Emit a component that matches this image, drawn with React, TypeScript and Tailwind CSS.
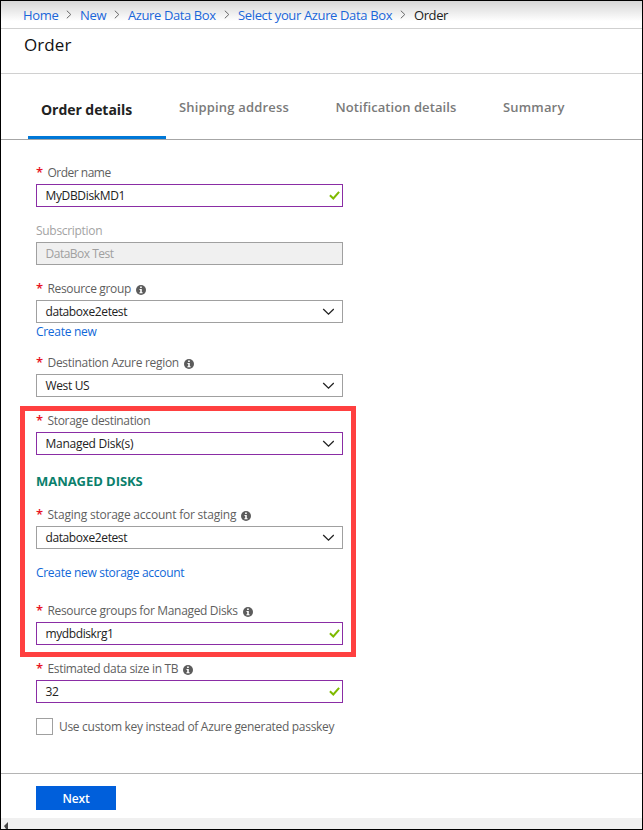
import React from "react";

const InfoIcon = () => (
  <svg className="mt-px shrink-0" width="10" height="10" viewBox="0 0 10 10">
    <circle cx="5" cy="5" r="5" fill="#5c5c5c" />
    <path d="M4.1 1.5h1.7v1.5H4.1zM3.5 3.9h2.3v3.4h.8v1H3.4v-1h.8V4.9h-.7z" fill="#fff" />
  </svg>
);

const Check = () => (
  <svg className="mr-[2px] shrink-0" width="11" height="9" viewBox="0 0 11 9">
    <path d="M.9 4.2 4.3 7.5 10.1 .8" fill="none" stroke="#7fba00" strokeWidth="2" />
  </svg>
);

const Chevron = () => (
  <svg className="mr-2 mt-px shrink-0" width="12" height="8" viewBox="0 0 12 8">
    <path d="M1.2 1 6.5 6.2 11.8 1" fill="none" stroke="#222" strokeWidth="1.3" />
  </svg>
);

const Separator = () => (
  <svg className="mt-[-1px] shrink-0" width="6" height="9" viewBox="0 0 6 9">
    <path d="M.8 .7 4.8 4.5 .8 8.3" fill="none" stroke="#666" strokeWidth="1" />
  </svg>
);

type FieldProps = {
  label: string;
  labelClass?: string;
  value: string;
  valueClass?: string;
  required?: boolean;
  info?: boolean;
  kind: "valid" | "select" | "disabled";
  edited?: boolean;
};

function Field({ label, labelClass = "tracking-[-0.2px]", value, valueClass = "tracking-[-0.4px]", required = true, info, kind, edited }: FieldProps) {
  const disabled = kind === "disabled";
  return (
    <div className="w-[307px]">
      <div className={`flex h-[23px] items-center whitespace-nowrap pt-px ${disabled ? "text-[#a3a3a3]" : "text-[#5f5f5f]"}`}>
        {required && <span className="mt-[-2px] w-[11.5px] shrink-0 text-[13px] font-semibold leading-none text-[#e81123]">*</span>}
        <span className={labelClass}>{label}</span>
        {info && (
          <span className="ml-[5px] flex">
            <InfoIcon />
          </span>
        )}
      </div>
      <div
        className={`flex h-[23px] items-center border pl-[8.5px] ${
          disabled
            ? "border-[#a0a0a0] bg-[#f0f0f0] text-[#a0a0a0]"
            : edited
              ? "border-[#8a2da5] bg-white text-[#222]"
              : "border-[#a0a0a0] bg-white text-[#222]"
        }`}
      >
        <span className={`flex-1 ${valueClass}`}>{value}</span>
        {kind === "valid" && <Check />}
        {kind === "select" && <Chevron />}
      </div>
    </div>
  );
}

export default function App() {
  return (
    <div className="flex h-[830px] w-[643px] flex-col overflow-hidden border border-black bg-white font-['Open_Sans','Noto_Sans',sans-serif] text-[12px] leading-[18px] tracking-[-0.3px] text-[#222]">
      <nav className="flex h-[27px] shrink-0 items-center whitespace-nowrap bg-linear-to-b from-[#d6d6d6] to-white to-75% pl-[22px] pt-px text-[13px] tracking-[-0.4px] text-[#1a66d9]">
        <span className="w-[43px] tracking-[-0.3px]">Home</span>
        <Separator />
        <span className="ml-2 w-[34px] tracking-[-0.3px]">New</span>
        <Separator />
        <span className="ml-2 w-[96px]">Azure Data Box</span>
        <Separator />
        <span className="ml-2 w-[162px] tracking-[-0.36px]">Select your Azure Data Box</span>
        <Separator />
        <span className="ml-2 text-[#222]">Order</span>
      </nav>
      <header className="h-[46px] shrink-0 border-b border-t border-[#d0d0d0] pl-[23px] pt-1">
        <h1 className="text-[17px] leading-6 tracking-[0.1px] text-[#111]">Order</h1>
      </header>
      <div className="flex h-[66px] shrink-0 border-b border-[#a6a6a6] text-[13px] font-semibold tracking-[0.17px] text-[#7a7a7a]">
        <div className="ml-[27px] w-[138px] border-b-[3px] border-[#0078d7] pl-[13px] pt-[27px] text-[14px] font-bold tracking-[-0.05px] text-[#222]">Order details</div>
        <div className="ml-[13px] w-[156.5px] pt-6">Shipping address</div>
        <div className="w-[167.5px] pt-6 tracking-[0.07px]">Notification details</div>
        <div className="pt-6">Summary</div>
      </div>
      <main className="flex h-[634px] shrink-0 flex-col border-b border-[#b4b4b4] pl-[35px] pt-[21px]">
        <Field label="Order name" labelClass="tracking-[-0.5px]" value="MyDBDiskMD1" valueClass="tracking-[-0.35px]" kind="valid" edited />
        <div className="h-3" />
        <Field label="Subscription" labelClass="tracking-[-0.3px]" value="DataBox Test" valueClass="tracking-[-0.5px]" kind="disabled" required={false} />
        <div className="h-3" />
        <Field label="Resource group" labelClass="tracking-[-0.35px]" value="databoxe2etest" kind="select" info />
        <a className="h-7 text-[#1068d8]">Create new</a>
        <Field label="Destination Azure region" labelClass="tracking-[-0.3px]" value="West US" valueClass="tracking-[-0.35px]" kind="select" info />
        <section className="relative mt-3 w-[307px]">
          <div className="pointer-events-none absolute -left-4 -top-[3px] h-[251px] w-[336px] border-[5px] border-[#ff4040]" />
          <Field label="Storage destination" labelClass="tracking-[-0.33px]" value="Managed Disk(s)" valueClass="tracking-[-0.27px]" kind="select" edited />
          <h2 className="mb-[11px] mt-[15px] h-[22px] text-[13px] font-bold leading-[22px] tracking-[-0.05px] text-[#0a806c]">MANAGED DISKS</h2>
          <Field label="Staging storage account for staging" labelClass="tracking-[-0.21px]" value="databoxe2etest" kind="select" info />
          <a className="mb-[17px] mt-[15px] block h-[18px] text-[#1068d8]">Create new storage account</a>
          <Field label="Resource groups for Managed Disks" labelClass="tracking-[-0.33px]" value="mydbdiskrg1" kind="valid" edited info />
        </section>
        <div className="h-3" />
        <Field label="Estimated data size in TB" labelClass="tracking-[-0.34px]" value="32" kind="valid" edited info />
        <label className="mt-[15px] flex h-[17px] items-center text-[#5f5f5f]">
          <span className="mr-[6px] size-[17px] border border-[#a0a0a0]" />
          <span>Use custom key instead of Azure generated passkey</span>
        </label>
      </main>
      <footer className="h-[44px] shrink-0 pl-[35px] pt-3">
        <button className="block h-6 w-20 bg-[#005fdb] pt-px font-semibold tracking-[-0.2px] text-white">Next</button>
      </footer>
      <div className="flex h-[11px] shrink-0 items-end bg-[#f0f0f0] pl-[3px]">
        <svg width="4" height="7" viewBox="0 0 4 7">
          <path d="M4 0v7H2L0 4z" fill="#444" />
        </svg>
      </div>
    </div>
  );
}
